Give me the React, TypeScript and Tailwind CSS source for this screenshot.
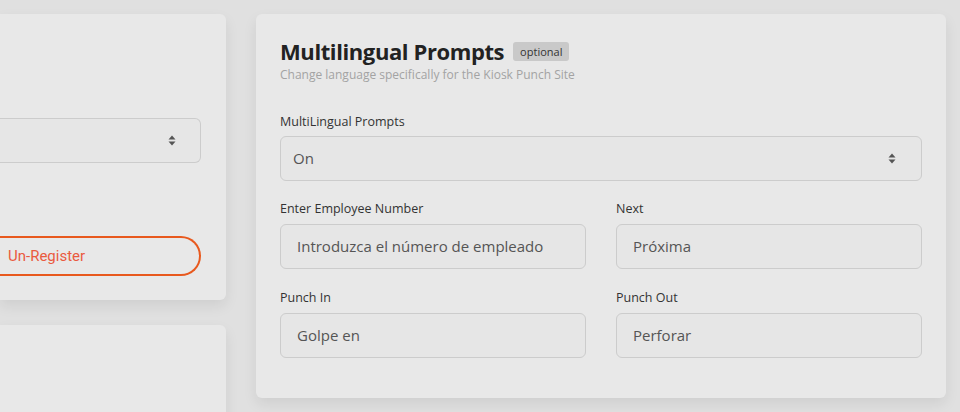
type Field = {
  label: string;
  value: string;
};

const fields: Field[] = [
  { label: "Enter Employee Number", value: "Introduzca el número de empleado" },
  { label: "Next", value: "Próxima" },
  { label: "Punch In", value: "Golpe en" },
  { label: "Punch Out", value: "Perforar" },
];

function SortArrows() {
  return (
    <svg width="8" height="11" viewBox="0 0 8 11" className="shrink-0">
      <path d="M4 0.5 L7.5 4.5 L0.5 4.5 Z" fill="#555" />
      <path d="M4 10.5 L7.5 6.5 L0.5 6.5 Z" fill="#555" />
    </svg>
  );
}

export default function App() {
  return (
    <div className="flex h-[412px] w-[960px] overflow-hidden bg-[#e0e0e0] font-['Open_Sans',sans-serif]">
      {/* Left column (cut off) */}
      <div className="flex w-[226px] shrink-0 flex-col gap-[25px] pt-[14px]">
        <div className="flex h-[286px] shrink-0 flex-col rounded-r-md bg-[#e8e8e8] pr-[25px] shadow-[0_6px_14px_rgba(0,0,0,0.08)]">
          <div className="mt-[104px] flex h-[45px] items-center justify-end rounded-r-md border border-l-0 border-[#cccccc] bg-[#e6e6e6] pr-[24px]">
            <SortArrows />
          </div>
          <button className="mt-[73px] flex h-[40px] items-center rounded-r-full border-2 border-l-0 border-[#e8591e] pl-[8px] text-[15px] text-[#ea5a40] font-['Roboto',sans-serif]">
            Un-Register
          </button>
        </div>
        <div className="h-[200px] shrink-0 rounded-r-md bg-[#e8e8e8] shadow-[0_6px_14px_rgba(0,0,0,0.08)]" />
      </div>

      {/* Right card */}
      <div className="ml-[30px] mt-[14px] h-[384px] w-[690px] rounded-md bg-[#e8e8e8] px-6 pt-[23px] shadow-[0_6px_14px_rgba(0,0,0,0.08)]">
        <div className="flex items-center gap-[9px]">
          <h2 className="text-[22px] leading-[29px] font-bold tracking-[-0.4px] text-[#222222]">Multilingual Prompts</h2>
          <span className="rounded-[3px] bg-[#c9c9c9] px-[7px] py-[2px] text-[11px] leading-[15px] text-[#333333]">
            optional
          </span>
        </div>
        <p className="mt-[1px] text-[12px] leading-[16px] text-[#a3a3a3]">
          Change language specifically for the Kiosk Punch Site
        </p>

        <label className="mt-[30px] block text-[12.5px] leading-[18px] text-[#333333]">MultiLingual Prompts</label>
        <div className="mt-[5px] flex h-[45px] items-center justify-between rounded-md border border-[#cccccc] bg-[#e6e6e6] pl-[12px] pr-[25px]">
          <span className="text-[15px] text-[#555555]">On</span>
          <SortArrows />
        </div>

        <div className="mt-[19px] grid grid-cols-2 gap-x-[30px] gap-y-[20px]">
          {fields.map((f) => (
            <div key={f.label} className="flex flex-col">
              <span className="text-[12.5px] leading-[18px] text-[#333333]">{f.label}</span>
              <div className="mt-[6px] flex h-[45px] items-center rounded-md border border-[#cccccc] bg-[#e6e6e6] px-[16px] text-[15px] text-[#555555]">
                {f.value}
              </div>
            </div>
          ))}
        </div>
      </div>
    </div>
  );
}
